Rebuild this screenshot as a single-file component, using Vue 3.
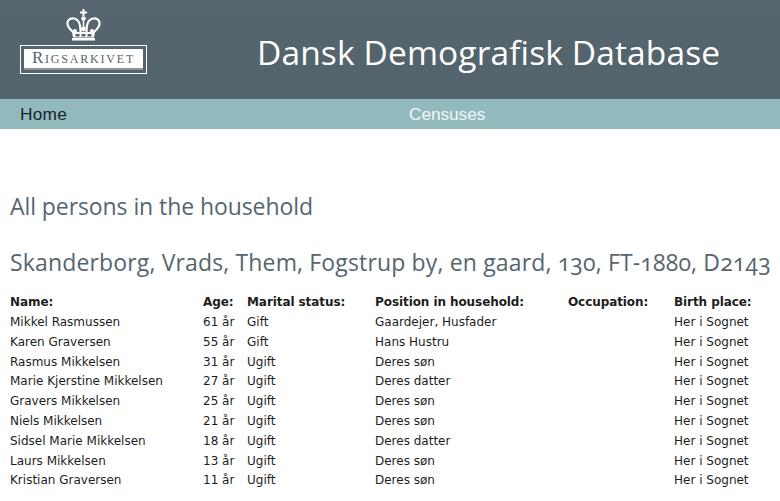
<script setup>
const columns = ['Name:', 'Age:', 'Marital status:', 'Position in household:', 'Occupation:', 'Birth place:']
const people = [
  ['Mikkel Rasmussen', '61 år', 'Gift', 'Gaardejer, Husfader'],
  ['Karen Graversen', '55 år', 'Gift', 'Hans Hustru'],
  ['Rasmus Mikkelsen', '31 år', 'Ugift', 'Deres søn'],
  ['Marie Kjerstine Mikkelsen', '27 år', 'Ugift', 'Deres datter'],
  ['Gravers Mikkelsen', '25 år', 'Ugift', 'Deres søn'],
  ['Niels Mikkelsen', '21 år', 'Ugift', 'Deres søn'],
  ['Sidsel Marie Mikkelsen', '18 år', 'Ugift', 'Deres datter'],
  ['Laurs Mikkelsen', '13 år', 'Ugift', 'Deres søn'],
  ['Kristian Graversen', '11 år', 'Ugift', 'Deres søn'],
]
</script>

<template>
  <div class="page">
    <header class="header">
      <div class="logo">
        <svg class="crown" width="36" height="32" viewBox="0 0 36 32" aria-hidden="true">
          <path fill="#fff" d="M16.500 0h2v2.500h2.500v2h-2.500V7h-2V4.500H14v-2h2.500z" />
          <circle cx="17.500" cy="9.500" r="2.300" fill="#fff" />
          <path fill="none" stroke="#fff" stroke-width="2.200" d="M7 23C3.500 20 1 16.500 1.500 13.500 2 10.500 5 8.800 8 9.500c4 1 5.500 4 6 7 .3 2 .5 4 .5 6.500" />
          <path fill="none" stroke="#fff" stroke-width="2.200" d="M28 23c3.500-3 6-6.500 5.500-9.500-.5-3-3.500-4.700-6.500-4-4 1-5.500 4-6 7-.3 2-.5 4-.5 6.500" />
          <path fill="none" stroke="#fff" stroke-width="1.500" d="M17.500 11v11" />
          <circle cx="17.500" cy="20" r="2.400" fill="#fff" />
          <circle cx="9" cy="22" r="2" fill="#fff" />
          <circle cx="26" cy="22" r="2" fill="#fff" />
          <path fill="#fff" d="M6 23h23l-1 5.500H7zM6 29h23v2.500H6z" />
          <path fill="#56656d" d="M9.500 25h4v2.500h-4zM15.500 25h4v2.500h-4zM21.500 25h4v2.500h-4z" />
        </svg>
        <div class="plate"><span class="plate-text">Rigsarkivet</span></div>
      </div>
      <h1 class="site-title">Dansk Demografisk Database</h1>
    </header>

    <nav class="nav">
      <a class="nav-home">Home</a>
      <a class="nav-censuses">Censuses</a>
    </nav>

    <main class="content">
      <h2 class="heading first">All persons in the household</h2>
      <h2 class="heading second">Skanderborg, Vrads, Them, Fogstrup by, en gaard, 130, FT-1880, D2143</h2>
      <table class="people">
        <thead>
          <tr><th v-for="c in columns" :key="c">{{ c }}</th></tr>
        </thead>
        <tbody>
          <tr v-for="p in people" :key="p[0]">
            <td>{{ p[0] }}</td>
            <td>{{ p[1] }}</td>
            <td>{{ p[2] }}</td>
            <td>{{ p[3] }}</td>
            <td></td>
            <td>Her i Sognet</td>
          </tr>
        </tbody>
      </table>
    </main>
  </div>
</template>

<style>
html, body { margin: 0; background: #fff; overflow: hidden; }
</style>

<style scoped>
.page { width: 780px; height: 501px; overflow: hidden; font-family: "DejaVu Sans", Verdana, sans-serif; }
.header {
  height: 99px;
  box-sizing: border-box;
  background: linear-gradient(#56656e, #53646d);
  display: flex;
  padding-left: 20px;
}
.logo { width: 127px; display: flex; flex-direction: column; align-items: center; padding-top: 9px; }
.crown { display: block; margin-bottom: 4px; }
.plate {
  width: 127px;
  height: 29px;
  box-sizing: border-box;
  border: 1px solid #fff;
  padding: 3px;
  display: flex;
}
.plate-text {
  flex: 1;
  background: #fff;
  border-bottom: 2px solid #8a959b;
  color: #56656d;
  font-family: "Liberation Serif", serif;
  font-variant: small-caps;
  font-size: 17px;
  letter-spacing: 1.800px;
  line-height: 18px;
  text-align: center;
}
.site-title {
  margin: 0 0 0 110px;
  font-family: "Open Sans", sans-serif;
  font-weight: 400;
  font-size: 33.500px;
  letter-spacing: 0.130px;
  line-height: 104px;
  color: #fff;
  white-space: nowrap;
}
.nav {
  height: 30px;
  background: #92babd;
  display: flex;
  padding-left: 20px;
  font-family: "Liberation Sans", Arial, sans-serif;
  font-size: 17.330px;
  line-height: 30px;
}
.nav-home { width: 389px; color: #17242b; letter-spacing: 0.200px; }
.nav-censuses { color: #f1f6f6; letter-spacing: -0.100px; }
.content { padding: 0 0 0 10px; }
.heading {
  margin: 0;
  font-family: "Open Sans", sans-serif;
  font-weight: 400;
  font-variant-numeric: oldstyle-nums;
  color: #56656e;
  white-space: nowrap;
}
.first { font-size: 23px; letter-spacing: -0.080px; line-height: 32px; padding-top: 61px; }
.second { font-size: 23px; letter-spacing: 0.150px; line-height: 32px; padding-top: 24px; }
.people {
  border-collapse: collapse;
  table-layout: fixed;
  width: 770px;
  margin-top: 15.200px;
  font-size: 12px;
  color: #1d1d1d;
}
.people th, .people td { padding: 0; text-align: left; white-space: nowrap; height: 19.800px; line-height: 19.800px; }
.people th { font-weight: 700; letter-spacing: -0.080px; }
.people th:nth-child(1) { width: 193px; }
.people th:nth-child(2) { width: 44px; }
.people th:nth-child(3) { width: 128px; }
.people th:nth-child(4) { width: 193px; }
.people th:nth-child(5) { width: 106px; }
</style>
